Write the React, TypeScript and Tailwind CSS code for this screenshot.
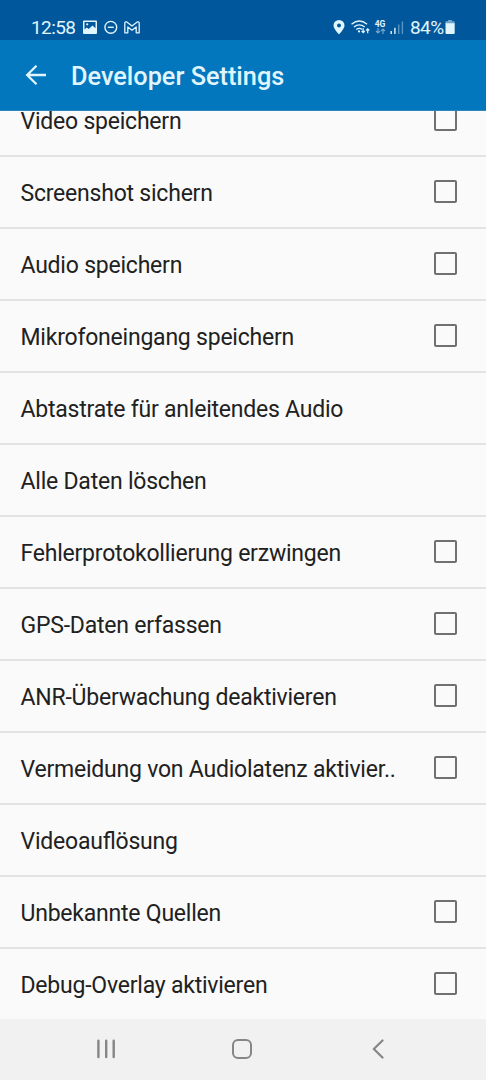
interface Setting {
  label: string;
  checkbox: boolean;
}

const settings: Setting[] = [
  { label: "Video speichern", checkbox: true },
  { label: "Screenshot sichern", checkbox: true },
  { label: "Audio speichern", checkbox: true },
  { label: "Mikrofoneingang speichern", checkbox: true },
  { label: "Abtastrate für anleitendes Audio", checkbox: false },
  { label: "Alle Daten löschen", checkbox: false },
  { label: "Fehlerprotokollierung erzwingen", checkbox: true },
  { label: "GPS-Daten erfassen", checkbox: true },
  { label: "ANR-Überwachung deaktivieren", checkbox: true },
  { label: "Vermeidung von Audiolatenz aktivier..", checkbox: true },
  { label: "Videoauflösung", checkbox: false },
  { label: "Unbekannte Quellen", checkbox: true },
  { label: "Debug-Overlay aktivieren", checkbox: true },
];

function StatusBar() {
  return (
    <div className="flex h-10 shrink-0 items-start bg-[#01579b] pt-[18px] text-[#e1f5fe]">
      <span className="ml-[31px] w-[52px] text-[19px] leading-5 tracking-[-0.6px] whitespace-nowrap">12:58</span>
      {/* Left side: picture, do not disturb, mail */}
      <svg className="mt-0.5 h-[15px] w-[14px]" viewBox="0 0 14 15">
        <path
          fillRule="evenodd"
          fill="currentColor"
          d="M1 .5h12a1 1 0 0 1 1 1v11.500a1 1 0 0 1-1 1H1a1 1 0 0 1-1-1V1.500a1 1 0 0 1 1-1ZM1.500 2v7.500l2.200-2 2 1.500L9.500 5.500l3 2.800V2Z"
        />
        <circle cx="4.200" cy="4.300" r="1.100" fill="currentColor" />
      </svg>
      <svg className="mt-0.5 ml-[7px] h-[15px] w-[14px]" viewBox="0 0 14 15" fill="none" stroke="currentColor" strokeWidth="1.400">
        <circle cx="6.800" cy="7.300" r="5.900" />
        <path d="M3.800 7.300h6" />
      </svg>
      <svg className="mt-0.5 ml-[6px] h-[15px] w-4" viewBox="0 0 16 15" fill="none" stroke="currentColor" strokeWidth="1.300" strokeLinejoin="round">
        <path d="M.8 12.800V3.200Q.8 1.500 2.800 1.900L8 6l5.200-4.100Q15.200 1.500 15.200 3.200v9.600h-3V6.900L8 10.200 3.800 6.900v5.900Z" />
      </svg>
      {/* Right side: location, wifi, network, signal, battery */}
      <svg className="mt-0.5 ml-[193px] h-[15px] w-3" viewBox="0 0 12 15">
        <path
          fillRule="evenodd"
          fill="currentColor"
          d="M6 0a5.500 5.500 0 0 1 5.500 5.500C11.500 9 6 14.300 6 14.300S.5 9 .5 5.500A5.500 5.500 0 0 1 6 0Zm0 3.500a2 2 0 1 0 0 4 2 2 0 0 0 0-4Z"
        />
      </svg>
      <svg className="mt-0.5 ml-[6px] h-[15px] w-[19px]" viewBox="0 0 19 15" fill="none" stroke="currentColor" strokeWidth="1.400">
        <path d="M.5 4.200q7.800-6.500 15.600 0M2.900 7q5.400-4.300 10.800 0M5.300 9.500q3-2.200 6 0" />
        <circle cx="8" cy="11.400" r="1.100" fill="currentColor" stroke="none" />
        <path strokeWidth="1.200" d="M12.200 8.200v4.300M10.600 11l1.600 1.600 1.600-1.600M16.700 13.200V9M15.100 10.500 16.700 8.900l1.600 1.600" />
      </svg>
      <div className="mt-0.5 ml-1 flex w-3 flex-col items-center">
        <span className="text-[8.500px] leading-[8px] font-bold">4G</span>
        <svg className="h-[6px] w-[11px] opacity-50" viewBox="0 0 11 6" fill="none" stroke="currentColor" strokeWidth="1.200">
          <path d="M3 0v5M1 3l2 2 2-2M8 6V1M6 3l2-2 2 2" />
        </svg>
      </div>
      <svg className="mt-0.5 ml-[4px] h-[15px] w-[14px]" viewBox="0 0 14 15" fill="currentColor">
        <rect x=".5" y="11" width="1.400" height="3" />
        <rect x="4.200" y="7.800" width="1.400" height="6.200" />
        <rect x="8" y="4.500" width="1.400" height="9.500" opacity=".4" />
        <rect x="11.700" y="1.500" width="1.400" height="12.500" opacity=".4" />
      </svg>
      <span className="ml-[6px] w-[35px] text-[19px] leading-5 tracking-[-0.6px] whitespace-nowrap">84%</span>
      <svg className="mt-0.5 h-[15px] w-[10px]" viewBox="0 0 10 15" fill="currentColor">
        <path opacity=".5" d="M3 0h4v1.300h2.500V4H.5V1.300H3Z" />
        <path d="M.5 3.300h9.200V13a1 1 0 0 1-1 1H1.500a1 1 0 0 1-1-1Z" />
      </svg>
    </div>
  );
}

function SettingRow({ label, checkbox }: Setting) {
  return (
    <label className="flex h-18 shrink-0 items-center border-b-2 border-[#e3e3e3] pr-[29px] pl-[20.500px]">
      <span className="flex-1 pt-[3px] text-[23px] leading-8 tracking-[-0.22px] whitespace-nowrap [font-feature-settings:'liga']">
        {label}
      </span>
      {checkbox && (
        <input
          type="checkbox"
          className="mb-px size-[23px] appearance-none rounded-[2px] border-2 border-[#707070]"
        />
      )}
    </label>
  );
}

function NavigationBar() {
  return (
    <nav className="flex h-[61px] shrink-0 items-center bg-[#f1f1f1] pb-px pl-24 text-[#868686]">
      <svg className="h-5 w-5" viewBox="0 0 20 20" fill="none" stroke="currentColor" strokeWidth="2.400" strokeLinecap="round">
        <path d="M2.400 1.700v16.400M10.200 1.700v16.400M17.700 1.700v16.400" />
      </svg>
      <svg className="ml-[116px] h-5 w-5" viewBox="0 0 20 20" fill="none" stroke="currentColor" strokeWidth="2">
        <rect x="1" y="1" width="18" height="18" rx="5" />
      </svg>
      <svg className="ml-[120px] h-5 w-3" viewBox="0 0 12 20" fill="none" stroke="currentColor" strokeWidth="2.200" strokeLinecap="round" strokeLinejoin="round">
        <path d="M10.500 1.500 1.800 10l8.700 8.500" />
      </svg>
    </nav>
  );
}

export default function App() {
  return (
    <div className="flex h-[1080px] w-full flex-col overflow-hidden bg-[#fafafa] font-[Roboto,sans-serif] text-[#212121]">
      <StatusBar />
      <header className="flex h-[71px] shrink-0 items-center border-b border-[#2c86be] bg-[#0277bd] text-[#e1f5fe]">
        <svg className="ml-[25px] h-6 w-[22px]" viewBox="0 0 22 24" fill="none" stroke="currentColor" strokeWidth="2.300">
          <path d="M21 12H2M11.500 2.800 2.200 12l9.300 9.200" />
        </svg>
        <h1 className="ml-6 pt-1 text-[25.300px] leading-8 font-medium whitespace-nowrap">Developer Settings</h1>
      </header>
      {/* The list is scrolled a little, so the first row sits partly under the header */}
      <main className="flex min-h-0 flex-1 flex-col overflow-hidden">
        <div className="-mt-[26px] flex shrink-0 flex-col">
          {settings.map((setting) => (
            <SettingRow key={setting.label} {...setting} />
          ))}
        </div>
      </main>
      <NavigationBar />
    </div>
  );
}
